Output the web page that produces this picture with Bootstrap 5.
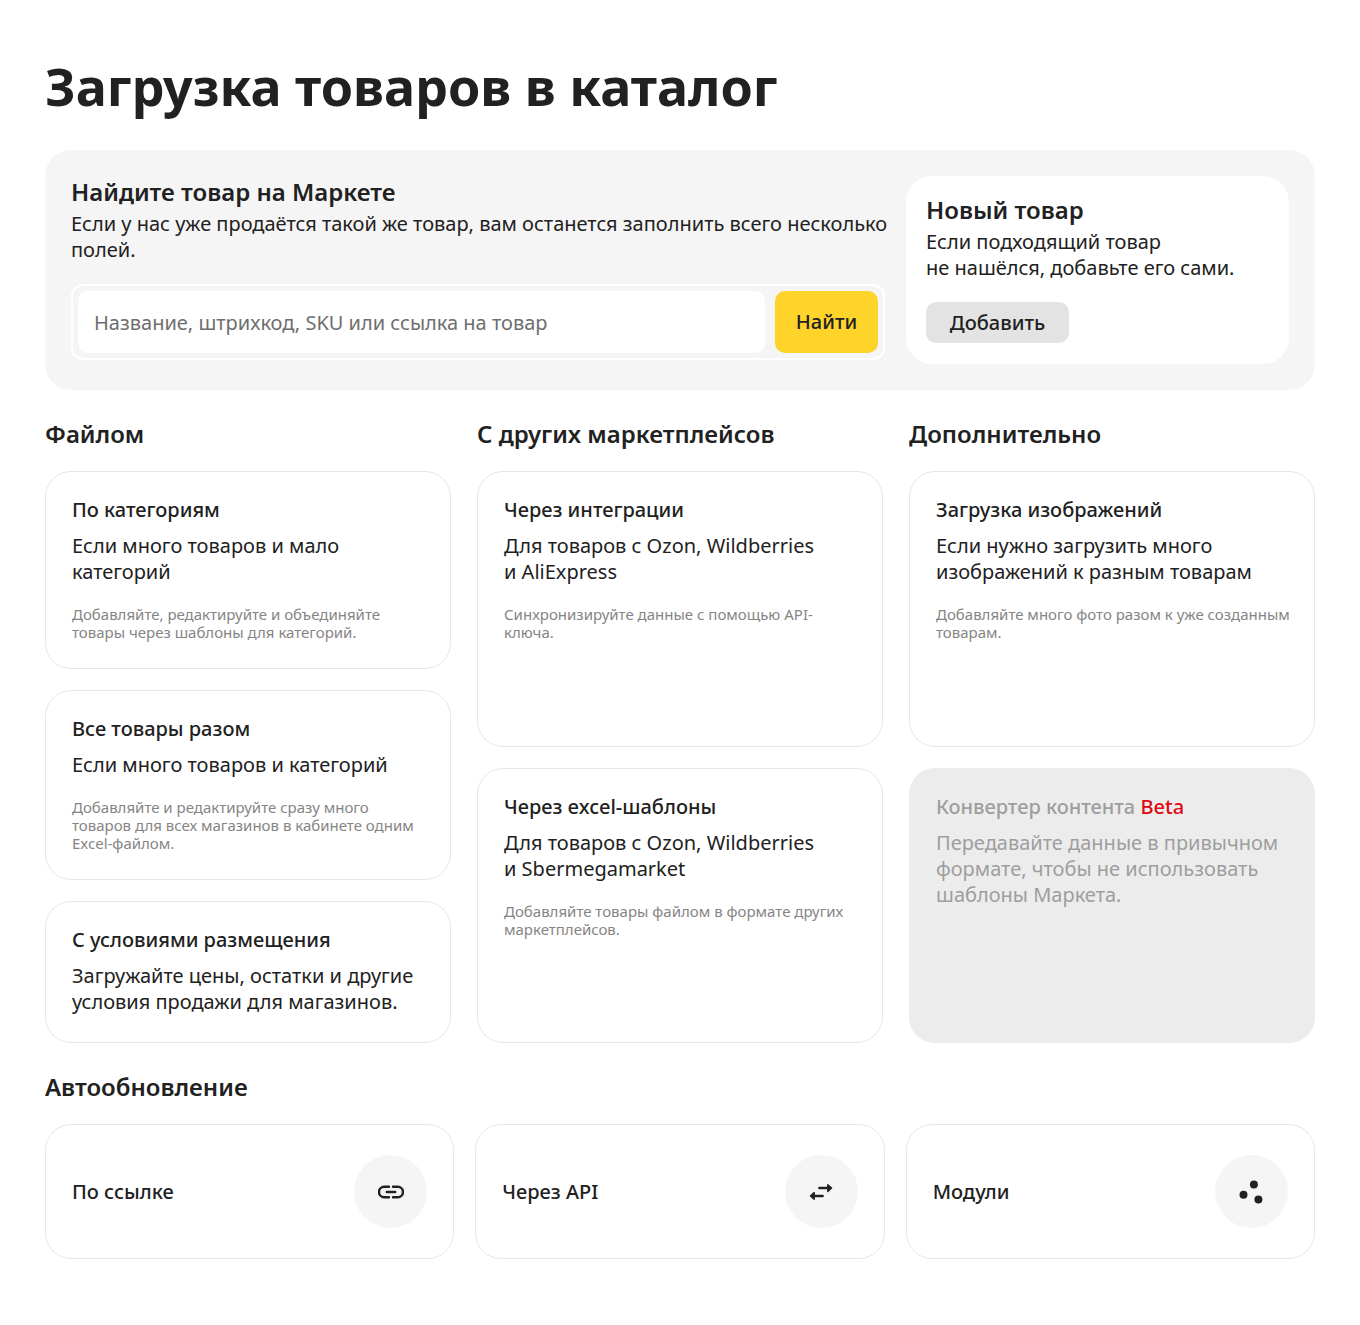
<!DOCTYPE html>
<html lang="ru">
<head>
<meta charset="utf-8">
<meta name="viewport" content="width=device-width, initial-scale=1">
<title>Загрузка товаров в каталог</title>
<link href="https://cdn.jsdelivr.net/npm/bootstrap@5.3.0/dist/css/bootstrap.min.css" rel="stylesheet">
<style>
  body { font-family: "Noto Sans", "Open Sans", sans-serif; font-size: 20px; line-height: 26px; color: #212121; background: #fff; }
  .page { padding: 50px 45px 66px; }
  h1 { font-size: 52px; line-height: 72px; font-weight: 700; margin: 0 0 28px; }
  h2 { font-size: 24px; line-height: 32px; font-weight: 600; margin: 0; }
  h3 { font-size: 20px; line-height: 26px; font-weight: 500; margin: 0 0 10px; }
  p { margin: 0; }
  .finder { background: #f5f5f5; border-radius: 26px; padding: 26px; gap: 21px; }
  .finder h2 { margin-bottom: 3px; }
  .finder-main { flex: 1 1 0; min-width: 0; }
  .finder-new { flex: 0 0 383px; min-width: 0; background: #fff; border-radius: 26px; padding: 18px 20px 21px; }
  .search-frame { border: 2px solid #fff; border-radius: 12px; padding: 5px; gap: 10px; margin-top: 21px; }
  .search-frame .form-control { height: 62px; border: 0; border-radius: 10px; padding: 0 16px; font-size: 20px; line-height: 40px; color: #212121; }
  .search-frame .form-control::placeholder { color: #6e6e6e; }
  .btn { font-size: 20px; line-height: 26px; font-weight: 500; border: 0; border-radius: 10px; color: #212121; }
  .btn-find { background: #fed42b; width: 103px; flex: none; padding: 0; }
  .btn-add { background: #e3e3e3; width: 143px; height: 41px; padding: 0; margin-top: 21px; }
  .btn-find:hover { background: #f5c81a; }
  .btn-add:hover { background: #d8d8d8; }
  .section-title { padding-top: 28px; margin-bottom: 21px; }
  .ways { column-gap: 26px; }
  .way-col { flex: 1 1 0; min-width: 0; }
  .stack { gap: 21px; }
  .tile { display: block; border: 1px solid #e7e7e7; border-radius: 26px; padding: 25px 26px 27px; color: inherit; text-decoration: none; }
  .tile:hover { border-color: #cfcfcf; }
  .tile-even { flex: 1 1 0; }
  .hint { font-size: 15px; line-height: 18px; color: #858585; margin-top: 20px; }
  .tile-off { background: #ececec; border-color: #ececec; color: #9e9e9e; }
  .beta { color: #dd0a14; }
  .auto { gap: 21px; }
  .auto .tile { flex: 1 1 0; padding: 30px 26px; }
  .auto h3 { margin: 0; }
  .bubble { width: 73px; height: 73px; border-radius: 50%; background: #f5f5f5; flex: none; }
  @media (min-width: 1340px) { .one-line { white-space: nowrap; } }
</style>
</head>
<body>
<main class="page">
  <h1>Загрузка товаров в каталог</h1>

  <section class="finder d-flex">
    <div class="finder-main">
      <h2><label for="q">Найдите товар на Маркете</label></h2>
      <p><span class="one-line">Если у нас уже продаётся такой же товар, вам останется заполнить всего несколько</span> полей.</p>
      <form class="search-frame d-flex">
        <input class="form-control" id="q" type="text" placeholder="Название, штрихкод, SKU или ссылка на товар">
        <button class="btn btn-find" type="button">Найти</button>
      </form>
    </div>
    <div class="finder-new">
      <h2>Новый товар</h2>
      <p>Если подходящий товар <br>не нашёлся, добавьте его сами.</p>
      <button class="btn btn-add" type="button">Добавить</button>
    </div>
  </section>

  <div class="ways d-flex">
    <section class="way-col d-flex flex-column">
      <h2 class="section-title">Файлом</h2>
      <div class="stack d-flex flex-column flex-grow-1">
        <a class="tile" href="#">
          <h3>По категориям</h3>
          <p>Если много товаров и мало категорий</p>
          <p class="hint">Добавляйте, редактируйте и объединяйте товары через шаблоны для категорий.</p>
        </a>
        <a class="tile" href="#">
          <h3>Все товары разом</h3>
          <p>Если много товаров и категорий</p>
          <p class="hint">Добавляйте и редактируйте сразу много товаров для всех магазинов в кабинете одним Excel-файлом.</p>
        </a>
        <a class="tile" href="#">
          <h3>С условиями размещения</h3>
          <p>Загружайте цены, остатки и другие условия продажи для магазинов.</p>
        </a>
      </div>
    </section>
    <section class="way-col d-flex flex-column">
      <h2 class="section-title">С других маркетплейсов</h2>
      <div class="stack d-flex flex-column flex-grow-1">
        <a class="tile tile-even" href="#">
          <h3>Через интеграции</h3>
          <p>Для товаров с Ozon, Wildberries и&nbsp;AliExpress</p>
          <p class="hint">Синхронизируйте данные с помощью API-ключа.</p>
        </a>
        <a class="tile tile-even" href="#">
          <h3>Через excel-шаблоны</h3>
          <p>Для товаров с Ozon, Wildberries и&nbsp;Sbermegamarket</p>
          <p class="hint">Добавляйте товары файлом в формате других маркетплейсов.</p>
        </a>
      </div>
    </section>
    <section class="way-col d-flex flex-column">
      <h2 class="section-title">Дополнительно</h2>
      <div class="stack d-flex flex-column flex-grow-1">
        <a class="tile tile-even" href="#">
          <h3>Загрузка изображений</h3>
          <p>Если нужно загрузить много изображений к разным товарам</p>
          <p class="hint"><span class="one-line">Добавляйте много фото разом к уже созданным</span> товарам.</p>
        </a>
        <div class="tile tile-even tile-off">
          <h3>Конвертер контента <span class="beta">Beta</span></h3>
          <p>Передавайте данные в привычном формате, чтобы не использовать шаблоны Маркета.</p>
        </div>
      </div>
    </section>
  </div>

  <section>
    <h2 class="section-title">Автообновление</h2>
    <div class="auto d-flex">
      <a class="tile d-flex align-items-center justify-content-between" href="#">
        <h3>По ссылке</h3>
        <span class="bubble d-flex align-items-center justify-content-center">
          <svg width="26" height="14" viewBox="0 0 26 14" fill="none" stroke="#212121" stroke-width="2.4" stroke-linecap="round" aria-hidden="true"><path d="M11 1.8H6.2a5.2 5.2 0 0 0 0 10.4H11M15 1.8h4.8a5.2 5.2 0 0 1 0 10.4H15M8.8 7h8.4"/></svg>
        </span>
      </a>
      <a class="tile d-flex align-items-center justify-content-between" href="#">
        <h3>Через API</h3>
        <span class="bubble d-flex align-items-center justify-content-center">
          <svg width="24" height="18" viewBox="0 0 24 18" fill="#212121" stroke="#212121" stroke-linecap="round" stroke-linejoin="round" aria-hidden="true"><path d="M10.4 5.1H19M13.6 12.9H5" stroke-width="2.5"/><path d="M18.8 1.7 22.6 5.1 18.8 8.5zM5.2 9.5 1.4 12.9 5.2 16.3z" stroke-width="1.4"/></svg>
        </span>
      </a>
      <a class="tile d-flex align-items-center justify-content-between" href="#">
        <h3>Модули</h3>
        <span class="bubble d-flex align-items-center justify-content-center">
          <svg width="24" height="24" viewBox="0 0 24 24" fill="#212121" aria-hidden="true"><circle cx="14.9" cy="4.5" r="4"/><circle cx="4.5" cy="14.7" r="4"/><circle cx="19.4" cy="19.4" r="4"/></svg>
        </span>
      </a>
    </div>
  </section>
</main>
<script src="https://cdn.jsdelivr.net/npm/bootstrap@5.3.0/dist/js/bootstrap.bundle.min.js"></script>
</body>
</html>
